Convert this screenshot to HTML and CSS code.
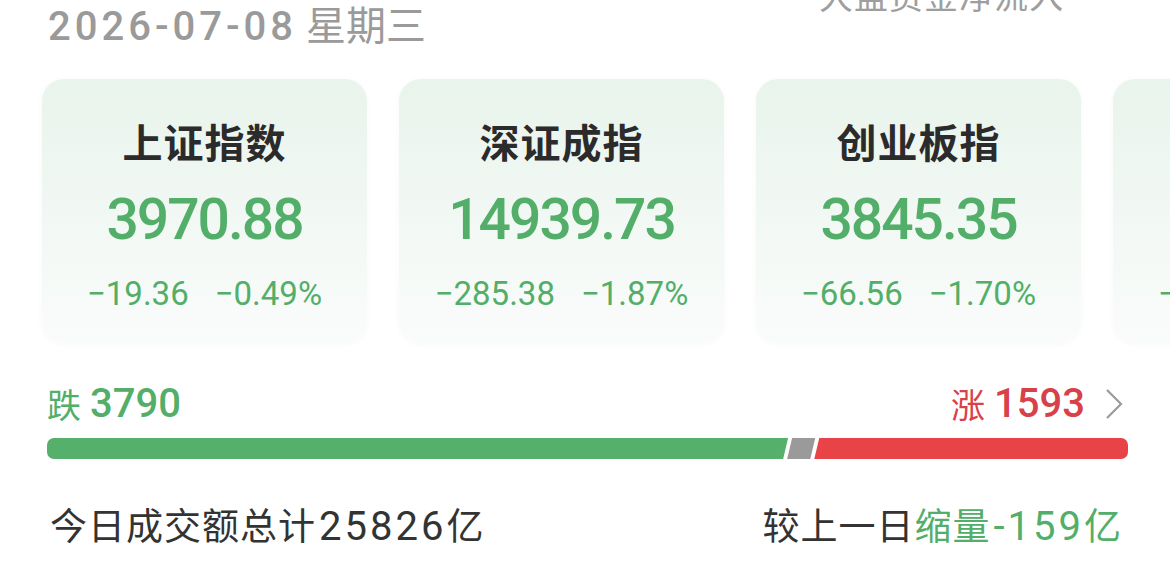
FILE: index.html
```html
<!DOCTYPE html>
<html lang="zh-CN">
<head>
    <meta charset="UTF-8">
    <meta name="viewport" content="width=device-width, initial-scale=1.0">
    <title>大盘概览</title>
    <link rel="stylesheet" href="styles.css">
</head>
<body>
    <div class="page">
        <div class="header">
            <div class="date"><span class="num">2026-07-08</span> 星期三</div>
            <div class="flow-label">大盘资金净流入</div>
        </div>

        <div class="cards">
            <div class="card">
                <div class="card-title">上证指数</div>
                <div class="card-price">3970.88</div>
                <div class="card-change"><span>−19.36</span><span>−0.49%</span></div>
            </div>
            <div class="card">
                <div class="card-title">深证成指</div>
                <div class="card-price">14939.73</div>
                <div class="card-change"><span>−285.38</span><span>−1.87%</span></div>
            </div>
            <div class="card">
                <div class="card-title">创业板指</div>
                <div class="card-price">3845.35</div>
                <div class="card-change"><span>−66.56</span><span>−1.70%</span></div>
            </div>
            <div class="card">
                <div class="card-title">科创50</div>
                <div class="card-price">1012.64</div>
                <div class="card-change"><span>−18.20</span><span>−1.77%</span></div>
            </div>
        </div>

        <div class="breadth">
            <div class="breadth-head">
                <div class="fall"><span class="label">跌</span><span class="count">3790</span></div>
                <div class="rise"><span class="label">涨</span><span class="count">1593</span>
                    <svg class="chevron" width="20" height="32" viewBox="0 0 20 32">
                        <path d="M3 2 L17 16 L3 30" fill="none" stroke="#9a9a9a" stroke-width="2.2"/>
                    </svg>
                </div>
            </div>
            <div class="bar">
                <div class="seg seg-fall" style="flex: 737"></div>
                <div class="seg seg-flat" style="flex: 28"></div>
                <div class="seg seg-rise" style="flex: 312"></div>
            </div>
        </div>

        <div class="volume">
            <div class="volume-total">今日成交额总计<span class="num">25826</span>亿</div>
            <div class="volume-diff">较上一日<span class="down">缩量<span class="num">-159</span>亿</span></div>
        </div>
    </div>
</body>
</html>
```

FILE: styles.css
```css
body {
    margin: 0;
    background: #ffffff;
    font-family: "Noto Sans CJK SC", "Noto Sans", sans-serif;
    color: #333333;
    overflow: hidden;
}
.page {
    width: 1170px;
    height: 564px;
    overflow: hidden;
}
.num {
    font-family: Roboto, "Noto Sans CJK SC", sans-serif;
}

/* header */
.header {
    display: flex;
    justify-content: space-between;
    align-items: flex-start;
    padding: 0 106px 0 48px;
    height: 79px;
}
.date {
    font-size: 40px;
    line-height: 1;
    color: #9a9a9a;
    margin-top: 3px;
}
.date .num {
    font-size: 40px;
    font-weight: 500;
    letter-spacing: 4px;
}
.flow-label {
    font-size: 34px;
    line-height: 1;
    color: #9e9e9e;
    margin-top: -22px;
    letter-spacing: 1px;
}

/* index cards */
.cards {
    display: flex;
    gap: 32px;
    padding-left: 42px;
}
.card {
    flex-shrink: 0;
    width: 325px;
    height: 264px;
    border-radius: 22px;
    background: linear-gradient(180deg, #e8f4ec 0%, #f2f8f4 55%, #fafcfb 100%);
    box-shadow: 0 1px 6px rgba(0, 0, 0, 0.035);
    display: flex;
    flex-direction: column;
    align-items: center;
    box-sizing: border-box;
    padding-top: 42px;
}
.card-title {
    font-size: 40px;
    font-weight: 700;
    line-height: 1;
    color: #2b2b2b;
    letter-spacing: 1px;
}
.card-price {
    font-family: Roboto, sans-serif;
    font-size: 57px;
    font-weight: 500;
    line-height: 1;
    color: #52ae68;
    margin-top: 30px;
    letter-spacing: -2px;
}
.card-change {
    display: flex;
    gap: 26px;
    font-family: Roboto, sans-serif;
    font-size: 33px;
    line-height: 1;
    color: #52ae68;
    margin-top: 29px;
}

/* advance / decline */
.breadth {
    padding: 0 42px 0 47px;
    margin-top: 40px;
}
.breadth-head {
    display: flex;
    justify-content: space-between;
    align-items: center;
    height: 42px;
}
.fall, .rise {
    display: flex;
    align-items: center;
    gap: 9px;
}
.label {
    font-size: 34px;
    line-height: 1;
}
.count {
    font-family: Roboto, sans-serif;
    font-size: 40px;
    font-weight: 500;
    line-height: 1;
}
.fall { color: #52ae68; }
.rise { color: #d8404a; }
.chevron {
    margin-left: 10px;
    margin-right: 4px;
}
.bar {
    display: flex;
    gap: 4px;
    height: 21px;
    margin-top: 13px;
    border-radius: 7px;
    overflow: hidden;
}
.seg {
    height: 100%;
}
.seg-fall {
    background: #55b06c;
    clip-path: polygon(0 0, 100% 0, calc(100% - 5px) 100%, 0 100%);
}
.seg-flat {
    background: #9a9a9a;
    margin-left: -5px;
    clip-path: polygon(5px 0, 100% 0, calc(100% - 5px) 100%, 0 100%);
}
.seg-rise {
    background: #e84346;
    margin-left: -5px;
    clip-path: polygon(5px 0, 100% 0, 100% 100%, 0 100%);
}

/* turnover */
.volume {
    display: flex;
    justify-content: space-between;
    padding: 0 48px 0 50px;
    margin-top: 47px;
    font-size: 37px;
    line-height: 1;
    color: #333333;
    letter-spacing: 1px;
}
.volume .num {
    font-size: 40px;
    letter-spacing: 3px;
    margin-left: 3px;
}
.down {
    color: #52ae68;
}
```
